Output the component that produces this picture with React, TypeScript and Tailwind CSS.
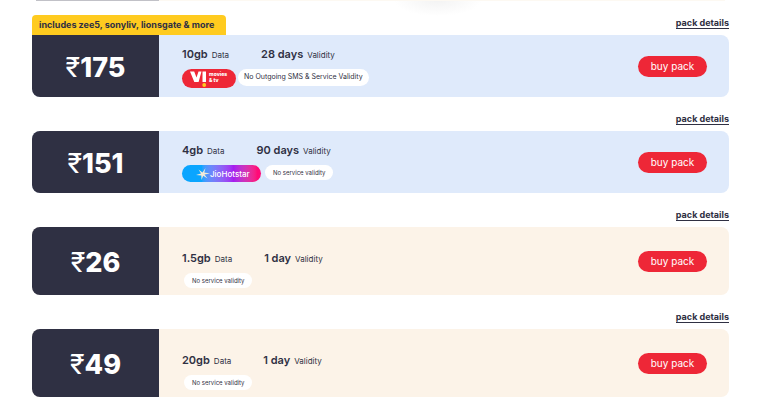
import type { ReactNode } from 'react';

interface PackProps {
  price: number;
  data: string;
  validity: string;
  theme: 'blue' | 'cream';
  banner?: string;
  badges: ReactNode;
}

const ViBadge = () => (
  <span className="flex h-[19px] w-[54px] items-center rounded-full bg-[#ee2737] pl-2 text-white">
    <svg viewBox="0 0 17 17" className="h-[17px] w-[17px] shrink-0" aria-label="Vi">
      <path d="M0 1.500h4.200l2.300 6 2-6h3L8.600 12H4.300z" fill="currentColor" />
      <path d="M12.500 1.500h3.500v10.500h-3.500z" fill="currentColor" />
      <circle cx="14.200" cy="15" r="1.900" fill="#ffcb1f" />
    </svg>
    <span className="mb-1 ml-0.5 flex flex-col text-[5px] leading-[6px] font-extrabold">
      <span>movies</span>
      <span>&amp; tv</span>
    </span>
  </span>
);

const HotstarBadge = () => (
  <span className="flex h-[17px] w-[79px] items-center rounded-full bg-linear-to-r from-[#0aa5ff] from-25% via-[#a51cf0] via-65% to-[#ff0a78] to-95% pl-[14px] text-white">
    <svg viewBox="0 0 14 12" className="h-3 w-[14px] shrink-0" aria-hidden="true">
      <path
        d="M6.500 4.500L9.500 0 8.300 4.600 14 5.500 8.500 6.600 11.500 10.500 7.200 7.800 5.500 12 5.300 7.500 0 7 5 5.600 2.500 1.500z"
        fill="#f3ead9"
      />
    </svg>
    <span className="text-[8px] leading-none font-medium">JioHotstar</span>
  </span>
);

const Note = ({ children, large }: { children: ReactNode; large?: boolean }) => (
  <span
    className={`flex items-center rounded-full bg-white whitespace-nowrap ${
      large ? 'h-[17px] px-1.5 text-[7px]' : 'ml-0.5 h-[15px] px-2 text-[6px]'
    }`}
  >
    {children}
  </span>
);

const Pack = ({ price, data, validity, theme, banner, badges }: PackProps) => {
  const isBlue = theme === 'blue';
  return (
    <article>
      <div className="flex h-[34px] items-end">
        {banner && (
          <p className="flex h-5 items-center rounded-t bg-[#ffcb1f] pr-3 pl-[7px] text-[9px] font-bold">
            {banner}
          </p>
        )}
        <a
          href="#details"
          className="mb-1.5 ml-auto border-b border-[#2f3043] text-[9px] leading-[11px] font-bold"
        >
          pack details
        </a>
      </div>

      <div
        className={`flex overflow-hidden rounded-lg ${
          isBlue ? 'bg-[#dfeafb]' : 'bg-[#fcf3e8]'
        } ${banner ? 'rounded-tl-none' : ''}`}
      >
        <div className="flex w-[127px] shrink-0 items-center justify-center bg-[#2f3043] pt-1 text-[27px] text-white">
          <span className="font-normal">₹</span>
          <span className="font-extrabold">{price}</span>
        </div>

        <div className={`grow pl-[23px] ${isBlue ? 'h-[62px] pt-3' : 'h-[68px] pt-6'}`}>
          <dl className="flex gap-8 leading-[14px]">
            <div className="flex flex-row-reverse items-baseline gap-1">
              <dt className="text-[8px]">Data</dt>
              <dd className="text-[11px] font-semibold">{data}</dd>
            </div>
            <div className="flex flex-row-reverse items-baseline gap-1">
              <dt className="text-[8px]">Validity</dt>
              <dd className="text-[11px] font-semibold">{validity}</dd>
            </div>
          </dl>
          <div className="mt-[7px] flex gap-0.5">{badges}</div>
        </div>

        <button
          type="button"
          className="mr-[22px] h-[21px] w-[69px] shrink-0 cursor-pointer self-center rounded-full bg-[#ee2737] text-[10px] text-white"
        >
          buy pack
        </button>
      </div>
    </article>
  );
};

export default function App() {
  return (
    <main className="bg-white bg-[radial-gradient(ellipse_44px_16px_at_57%_0,#f3f3f3,#ffffff)] pr-[39px] pl-8 font-['Inter',sans-serif] text-[#2f3043]">
      {/* Bottom edge of the previous card */}
      <div className="flex h-px px-1">
        <div className="w-[123px] bg-[#c1c1c7]" />
        <div className="grow bg-[#fdf9f2]" />
      </div>

      <Pack
        price={175}
        data="10gb"
        validity="28 days"
        theme="blue"
        banner="includes zee5, sonyliv, lionsgate & more"
        badges={
          <>
            <ViBadge />
            <Note large>No Outgoing SMS &amp; Service Validity</Note>
          </>
        }
      />
      <Pack
        price={151}
        data="4gb"
        validity="90 days"
        theme="blue"
        badges={
          <>
            <HotstarBadge />
            <Note>No service validity</Note>
          </>
        }
      />
      <Pack price={26} data="1.5gb" validity="1 day" theme="cream" badges={<Note>No service validity</Note>} />
      <Pack price={49} data="20gb" validity="1 day" theme="cream" badges={<Note>No service validity</Note>} />
    </main>
  );
}
